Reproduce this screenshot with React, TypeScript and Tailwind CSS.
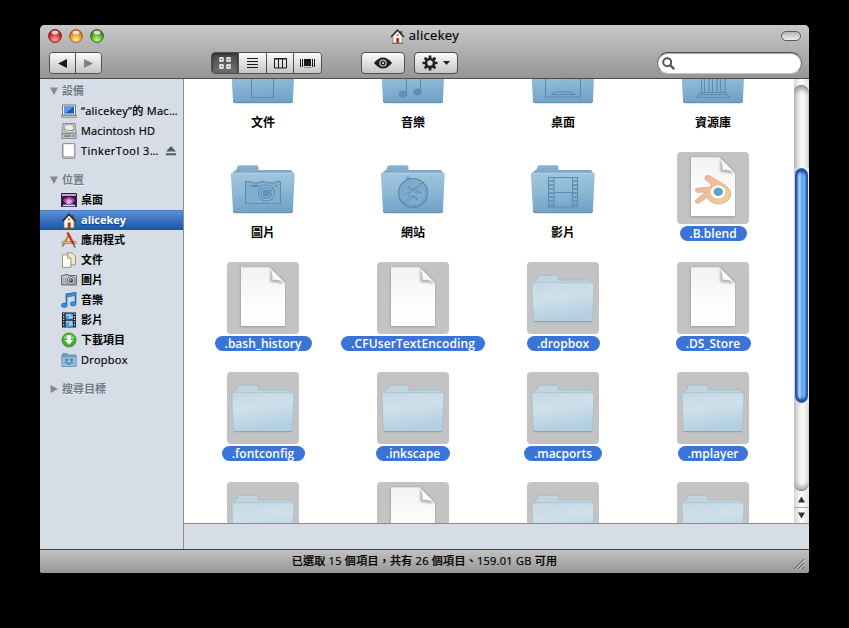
import React from 'react';

type Glyph = 'doc' | 'music' | 'desktop' | 'library' | 'camera' | 'compass' | 'film';

function Folder({ glyph }: { glyph: Glyph }) {
  return (
    <svg viewBox="0 0 72 72" className="size-[72px]">
      <defs>
        <linearGradient id="fb" x1="0" y1="0" x2="0" y2="1">
          <stop offset="0" stopColor="#8db5d0" />
          <stop offset="1" stopColor="#6b9dc1" />
        </linearGradient>
        <linearGradient id="ff" x1="0" y1="0" x2=".12" y2="1">
          <stop offset="0" stopColor="#a3c6dd" />
          <stop offset="0.5" stopColor="#8fb9d6" />
          <stop offset="1" stopColor="#71a3c9" />
        </linearGradient>
      </defs>
      <path d="M6 24V20l3.500-2.500L10.500 14.500q.5-1.300 2-1.300H29.500q2 0 2 2V18H63q2 0 2.500 2l1 2V26H6z" fill="url(#fb)" />
      <path d="M4.500 20.800H66.700q1.200 0 1 1.600L65.900 58.500q0 2-2 2H8q-2 0-2-2L3.900 22.400q-.2-1.600.6-1.600z" fill="url(#ff)" />
      <path d="M6.200 59q.3 1.700 2 1.700H63.700q1.800 0 2-1.700" fill="none" stroke="#587e9c" strokeWidth="1" />
      <path d="M4.500 21.300H67" stroke="#b7d3e5" strokeWidth=".8" />
      <g fill="none" stroke="#5d8cb2" strokeWidth="1.100">
        {glyph === 'camera' && (
          <>
            <path d="M18.500 31q-.5-2 2-1.500h3l1 1.200H32q4-2.500 8 0h8l1-1.200h3.500q1.500.5 1 2V51.500H18.500z" fill="#81aecd" />
            <path d="M24.500 34h7M48.500 34h1.500" strokeWidth="1.800" />
            <circle cx="39.500" cy="41" r="8" fill="#8ab3d1" />
            <circle cx="39.500" cy="41" r="5.300" />
            <circle cx="39.500" cy="41" r="3" fill="#6394ba" />
          </>
        )}
        {glyph === 'compass' && (
          <>
            <circle cx="36" cy="41" r="14.300" strokeWidth="1.600" />
            <circle cx="36" cy="41" r="12.300" fill="#80adce" strokeWidth=".5" />
            <circle cx="31" cy="26.500" r="1.500" />
            <path d="M45 31l-5.500 8 5.500 1.500-6 2 2 6-5-3.500-9 7 6-8.500-6-1.500 6-2-2-6 5 3.500z" fill="#6c9bc0" strokeWidth=".6" />
            <path d="M44 32L28.500 50.500M32 37l8 8M29 42h14" stroke="#96bbd6" strokeWidth=".8" />
          </>
        )}
        {glyph === 'film' && (
          <>
            <path d="M21.500 25.500H50.500V55H21.500zM27 25.500v29.500M45.500 25.500v29.500M27 40.500H45.500" />
            <path
              d="M22 29h4.500M22 33h4.500M22 37h4.500M22 41h4.500M22 45h4.500M22 49h4.500M22 53h4.500M46 29h4.500M46 33h4.500M46 37h4.500M46 41h4.500M46 45h4.500M46 49h4.500M46 53h4.500"
              strokeWidth="1.600"
            />
          </>
        )}
        {glyph === 'doc' && <path d="M24.500 25H46.500V55.500H24.500z" />}
        {glyph === 'music' && (
          <>
            <path d="M29.500 51V30l14-2V49" />
            <ellipse cx="26" cy="52" rx="3.700" ry="3" fill="#5e8fb6" />
            <ellipse cx="40.500" cy="50" rx="3.700" ry="3" fill="#5e8fb6" />
          </>
        )}
        {glyph === 'desktop' && <path d="M18.500 28H53.500V55H18.500zM25 52.500l3-2.500H44l3.500 2.500z" />}
        {glyph === 'library' && (
          <path d="M24.500 30v20M27.500 30v20M32 30v20M35.500 30v20M40 30v20M43.500 30v20M48 30v20M24 50.500H48l1.500 2H22.500zM22 52.500h28l3 3H19.500z" />
        )}
      </g>
    </svg>
  );
}

function PaleFolder() {
  return (
    <svg viewBox="0 0 72 72" className="size-[72px]">
      <defs>
        <linearGradient id="pf" x1="0" y1="0" x2=".25" y2="1">
          <stop offset="0" stopColor="#c5d9e4" />
          <stop offset="0.45" stopColor="#cfe0ea" />
          <stop offset="1" stopColor="#b3cfe1" />
        </linearGradient>
      </defs>
      <path d="M7 24v-4l3-3 1-2.500q.5-1.200 2-1.200H29.500q1.700 0 1.700 1.700V18H62.500l3 2v4z" fill="#c0d5e0" stroke="#9fb5c3" strokeWidth=".7" />
      <path d="M5.800 20.700H66q1 .5.900 1.700L65.500 57.500q0 2-1.500 2H7.700Q6.300 59.500 6.300 57.500L5 22.500q-.1-1.300.8-1.800z" fill="url(#pf)" stroke="#a3bac9" strokeWidth=".6" />
      <path d="M6.600 59.700H65.400" stroke="#899dab" strokeWidth="1" />
    </svg>
  );
}

function FilePage({ blend }: { blend?: boolean }) {
  return (
    <svg viewBox="0 0 72 72" className="size-[72px]">
      <defs>
        <linearGradient id="pg" x1="0" y1="0" x2="0" y2="1">
          <stop offset="0" stopColor="#f2f2f2" />
          <stop offset="0.6" stopColor="#fdfdfd" />
          <stop offset="1" stopColor="#fff" />
        </linearGradient>
        <linearGradient id="curl" x1="0" y1="1" x2="1" y2="0">
          <stop offset="0" stopColor="#e4e4e4" />
          <stop offset="0.45" stopColor="#fff" />
          <stop offset="1" stopColor="#ddd" />
        </linearGradient>
        <linearGradient id="org" x1="0" y1="0" x2="1" y2="1">
          <stop offset="0" stopColor="#efae96" />
          <stop offset="1" stopColor="#f3cf98" />
        </linearGradient>
        <filter id="soft" x="-20%" y="-20%" width="140%" height="140%">
          <feGaussianBlur stdDeviation="1" />
        </filter>
      </defs>
      <path d="M13.500 5.500H43L58 20.500V65H13.500z" fill="#8d8d8d" filter="url(#soft)" opacity=".8" />
      <path d="M14 5.300H42.500L58 21V64H14z" fill="url(#pg)" />
      <path d="M43.500 7V20Q50 19.500 56 22L52 16z" fill="#888" opacity=".7" filter="url(#soft)" />
      <path d="M42.500 5.300Q45.500 9 45.300 18.200Q54 17.500 58 21Z" fill="url(#curl)" stroke="#bbb" strokeWidth=".3" />
      {blend && (
        <g>
          <path
            d="M28.500 24.500q2-2 4.500-.5L48 33q7 5 5.500 11-2.500 8-13 8-8-1-10-7L22 51q-3 1-4-1 0-1.500 2-3l8-7-8 .5q-2-1-1.500-3.200Q19.500 36 22 36l11.500-1 .5-3L28.500 28q-1.500-2-0-3.500z"
            fill="url(#org)"
            stroke="#cfa994"
            strokeWidth=".7"
          />
          <ellipse cx="41" cy="40" rx="7.500" ry="6.500" fill="#fff" />
          <ellipse cx="41.300" cy="39.700" rx="4.700" ry="4.200" fill="#62a3cd" />
        </g>
      )}
    </svg>
  );
}

interface Item {
  name?: string;
  kind: Glyph | 'folder' | 'file' | 'blend';
  w?: string;
}

const items: Item[] = [
  { name: '文件', kind: 'doc' },
  { name: '音樂', kind: 'music' },
  { name: '桌面', kind: 'desktop' },
  { name: '資源庫', kind: 'library' },
  { name: '圖片', kind: 'camera' },
  { name: '網站', kind: 'compass' },
  { name: '影片', kind: 'film' },
  { name: '.B.blend', kind: 'blend', w: 'w-[67px]' },
  { name: '.bash_history', kind: 'file', w: 'w-[97px]' },
  { name: '.CFUserTextEncoding', kind: 'file', w: 'w-[144px] tracking-[0.1px]' },
  { name: '.dropbox', kind: 'folder', w: 'w-[73px]' },
  { name: '.DS_Store', kind: 'file', w: 'w-[75px]' },
  { name: '.fontconfig', kind: 'folder', w: 'w-[83px]' },
  { name: '.inkscape', kind: 'folder', w: 'w-[74px]' },
  { name: '.macports', kind: 'folder', w: 'w-[78px]' },
  { name: '.mplayer', kind: 'folder', w: 'w-[70px]' },
  { kind: 'folder' },
  { kind: 'file' },
  { kind: 'folder' },
  { kind: 'folder' },
];

function GridItem({ item }: { item: Item }) {
  const selected = item.kind === 'folder' || item.kind === 'file' || item.kind === 'blend';
  return (
    <div className="flex h-[110px] flex-col items-center">
      <div className={`size-[72px] rounded ${selected ? 'bg-[#c3c3c3]' : ''}`}>
        {item.kind === 'folder' ? (
          <PaleFolder />
        ) : item.kind === 'file' || item.kind === 'blend' ? (
          <FilePage blend={item.kind === 'blend'} />
        ) : (
          <Folder glyph={item.kind as Glyph} />
        )}
      </div>
      {item.name &&
        (selected ? (
          <div
            className={`mt-[2px] flex h-[15px] items-center justify-center rounded-full bg-[#3a74d6] text-[12px] font-semibold whitespace-nowrap text-white ${item.w}`}
          >
            {item.name}
          </div>
        ) : (
          <div className="mt-[1px] text-[12px] leading-[16px] font-bold">{item.name}</div>
        ))}
    </div>
  );
}

function House({ className }: { className: string }) {
  return (
    <svg viewBox="0 0 16 16" className={className}>
      <path d="M11 2h2v4h-2z" fill="#6b4a3c" />
      <path d="M3 8l5-6 5 6v7H3z" fill="#f7f3ea" stroke="#776d60" strokeWidth=".7" />
      <path d="M1 8.500L8 1.200l7 7.300" fill="none" stroke="#332b28" strokeWidth="1.500" />
      <path d="M6.700 9.500h3V15h-3z" fill="#a63a20" />
      <path d="M7 5.500h2v2H7z" fill="#c86b3a" />
      <path d="M2 15.300h12" stroke="#5f6152" strokeWidth=".8" />
    </svg>
  );
}

function SideIcon({ kind }: { kind: string }) {
  if (kind === 'home') return <House className="size-4" />;
  return (
    <svg viewBox="0 0 16 16" className="size-4 shrink-0">
      {kind === 'mac' && (
        <>
          <path d="M1.500 2h13v10h-13z" fill="#eef1f5" stroke="#6e7580" />
          <path d="M3 3.500h10v7H3z" fill="#1d57b8" />
          <path d="M3 3.500h10L4 10.500H3z" fill="#5b9bea" />
          <path d="M0 12.500h16l-.7 1.800H.7z" fill="#d6d9de" stroke="#6c727a" strokeWidth=".7" />
        </>
      )}
      {kind === 'hd' && (
        <>
          <path d="M2 .5h12l1.200 10v5H.8v-5z" fill="#c6c6c6" stroke="#777" strokeWidth=".7" />
          <ellipse cx="8" cy="5.500" rx="5" ry="4.300" fill="#ececec" stroke="#8c8c8c" strokeWidth=".8" />
          <path d="M3.500 5.500q4 4 9 1M1 10.700h14" stroke="#777" strokeWidth=".9" fill="none" />
          <path d="M3 13h7" stroke="#555" />
          <circle cx="12.500" cy="13" r=".8" fill="#444" />
        </>
      )}
      {kind === 'disk' && (
        <>
          <rect x="1.500" y=".5" width="12.500" height="15" rx="1.200" fill="#b9bbbd" stroke="#797c80" strokeWidth=".7" />
          <rect x="2.800" y="1.300" width="10" height="11.700" rx=".8" fill="#fff" />
        </>
      )}
      {kind === 'desktop' && (
        <>
          <path d="M.5 1.500h15v13H.5z" fill="#3b1250" stroke="#2b2636" />
          <path d="M1 2h14v2H1z" fill="#bfa6c8" />
          <path d="M2 8q6-6 12 0l-2 3H4z" fill="#b347ab" />
          <path d="M5 9q3-4 6 0l-1 3H6z" fill="#f0a2de" />
          <path d="M2 13.500h12" stroke="#d9e4f2" strokeWidth="1.500" />
          <path d="M4 12.500h2M7 12.500h2M10 12.500h2" stroke="#4ba3ea" strokeWidth="1.500" />
        </>
      )}
      {kind === 'apps' && (
        <>
          <path d="M1.500 14.500L8 2.500" stroke="#b5852f" strokeWidth="1.800" />
          <path d="M.5 10.500h15" stroke="#e2c37a" strokeWidth="1.800" />
          <path d="M.5 9.500h15M.5 11.500h15" stroke="#775c28" strokeWidth=".5" />
          <path d="M6.500.5l6 11.500" stroke="#d02a22" strokeWidth="2.400" />
          <path d="M12.500 12l1.700 3.500" stroke="#444" strokeWidth="1.200" />
        </>
      )}
      {kind === 'docs' && (
        <>
          <path d="M6 .8h5l3.500 3.500v8.500H6z" fill="#efe9cf" stroke="#8c8768" strokeWidth=".8" />
          <path d="M1.500 2.800h5L10 6.300v9H1.500z" fill="#fffef4" stroke="#85815f" strokeWidth=".8" />
          <path d="M6.500 2.800v3.500H10" fill="#ddd6b5" stroke="#85815f" strokeWidth=".6" />
        </>
      )}
      {kind === 'pics' && (
        <>
          <path d="M.5 3.500h3l.5-1h3l.5 1h8V13H.5z" fill="#aeb1b5" stroke="#55585c" strokeWidth=".8" />
          <path d="M1 5h14" stroke="#e6e8ea" />
          <circle cx="10" cy="8.500" r="4" fill="#d9dce0" stroke="#555" strokeWidth=".8" />
          <circle cx="10" cy="8.500" r="2.300" fill="#3f4d66" />
          <circle cx="9.500" cy="8" r=".8" fill="#c9d8f0" />
        </>
      )}
      {kind === 'music' && (
        <>
          <path d="M5.500 13V2.500l9-1.500v10" fill="none" stroke="#1f67b8" strokeWidth="1.600" />
          <path d="M5 2.200l10-1.700v3L5 5.200z" fill="#3c8fe0" stroke="#1a5ba6" strokeWidth=".5" />
          <ellipse cx="3.300" cy="13.300" rx="2.900" ry="2.200" fill="#3c8fe0" stroke="#1a5ba6" strokeWidth=".6" />
          <ellipse cx="12.200" cy="11.800" rx="2.900" ry="2.200" fill="#3c8fe0" stroke="#1a5ba6" strokeWidth=".6" />
        </>
      )}
      {kind === 'movies' && (
        <>
          <path d="M1 .5h14v15H1z" fill="#161a22" />
          <path d="M4.500 1.500h7.500v6H4.500zM4.500 8.500h7.500v6.500H4.500z" fill="#4f9be6" />
          <path d="M5 3h5l-2 3 4-1M5 10h6l-3 3 4-1" stroke="#cfe6fa" fill="none" />
          <path d="M2.700 1.500v13.500M13.500 1.500v13.500" stroke="#eee" strokeWidth="1.300" strokeDasharray="1.300 1.300" />
        </>
      )}
      {kind === 'down' && (
        <>
          <circle cx="8" cy="8" r="7" fill="#3fae33" stroke="#28771f" strokeWidth=".7" />
          <path d="M2.500 6.500a5.600 5 0 0 1 11 0q-5 2-11 0z" fill="#86d777" />
          <path d="M6.300 3.500h3.400V8h2.800L8 12.700 3.500 8h2.800z" fill="#fff" />
        </>
      )}
      {kind === 'dropbox' && (
        <>
          <path d="M1 3l1-1.500h4L7 3h8v11.500H1z" fill="#6c9cbe" stroke="#5a84a4" strokeWidth=".7" />
          <path d="M.7 4.800h14.800l-.4 9.700H1z" fill="#92bcd8" stroke="#6590b0" strokeWidth=".6" />
          <path d="M5.500 6.200L8 7.700l2.500-1.500 2 1.500-1.500 1.600 1.500 1.500-2 .7L8 13.300l-2.500-1.800-2-.7L5 9.300 3.500 7.700z" fill="#5b8cb2" />
          <path d="M5.800 9.300L8 8l2.200 1.300L8 10.700z" fill="#a8cbe2" />
        </>
      )}
    </svg>
  );
}

function SideRow({ icon, label, selected, eject, cls = '' }: { icon: string; label: string; selected?: boolean; eject?: boolean; cls?: string }) {
  return (
    <div
      className={`flex h-5 items-center pl-[21px] text-[11px] whitespace-nowrap ${
        selected
          ? 'border-t border-[#4580c8] bg-linear-to-b from-[#5590d6] to-[#1b53ab] font-bold text-white [text-shadow:0_1px_1px_#0f3a80]'
          : 'text-black'
      }`}
    >
      <SideIcon kind={icon} />
      <span className={`ml-1 ${cls}`}>{label}</span>
      {eject && (
        <svg viewBox="0 0 10 10" className="mr-[7px] ml-auto size-[10px]">
          <path d="M5 0l5 5.500H0zM0 7.300h10v2H0z" fill="#555b63" />
        </svg>
      )}
    </div>
  );
}

function SideHeader({ label, closed }: { label: string; closed?: boolean }) {
  return (
    <div className="flex h-5 items-center pl-[10px] text-[11px] font-bold text-[#717b89] [text-shadow:0_1px_0_#eef1f6]">
      <svg viewBox="0 0 8 8" className="mr-1 size-2">
        <path d={closed ? 'M.5 0v8L8 4z' : 'M0 .5h8L4 8z'} fill="#848b95" />
      </svg>
      {label}
    </div>
  );
}

function TrafficLight({ id, dark, mid, light }: { id: string; dark: string; mid: string; light: string }) {
  return (
    <svg viewBox="0 0 14 14" className="size-[14px]">
      <defs>
        <radialGradient id={id} cx=".5" cy=".8" r=".75">
          <stop offset="0" stopColor={light} />
          <stop offset="0.55" stopColor={mid} />
          <stop offset="1" stopColor={dark} />
        </radialGradient>
      </defs>
      <circle cx="7" cy="7" r="6.400" fill={`url(#${id})`} stroke={dark} strokeWidth="1" />
      <ellipse cx="7" cy="3.600" rx="3.400" ry="2" fill="#fff" opacity=".75" />
    </svg>
  );
}

const button = 'flex items-center justify-center bg-linear-to-b from-[#fbfbfb] to-[#c6c6c6]';
const latin = 'font-medium [-webkit-text-stroke:0.2px_currentColor]';

export default function App() {
  return (
    <div className="h-[628px] w-[849px] overflow-hidden bg-black pt-[25px] pl-[40px] font-['Open_Sans','Noto_Sans_CJK_TC',sans-serif] text-black" lang="zh-TW">
      <div className="flex h-[548px] w-[769px] flex-col overflow-hidden rounded-t-[5px] rounded-b-[3px] bg-white">
        <header className="h-[54px] shrink-0 border-b border-[#4a4a4a] bg-linear-to-b from-[#c8c8c8] to-[#969696]">
          <div className="grid h-[22px] grid-cols-[1fr_auto_1fr] items-center pr-2 pl-2">
            <div className="flex gap-[7px]">
              <TrafficLight id="r" dark="#8e1a1f" mid="#e0393f" light="#ffb0a8" />
              <TrafficLight id="y" dark="#a25f1c" mid="#efa038" light="#fff39a" />
              <TrafficLight id="g" dark="#2c6b1b" mid="#62b135" light="#cdf78e" />
            </div>
            <div className="flex items-center text-[13px]">
              <House className="mr-1 size-[15px]" />
              <span className={`tracking-[0.3px] ${latin}`}>alicekey</span>
            </div>
            <div className="h-[10px] w-5 justify-self-end rounded-full border border-[#5d5d5d] bg-linear-to-b from-[#b5b5b5] to-[#efefef]" />
          </div>
          <div className="flex pt-[5px] pl-[9px]">
            <div className="flex h-[22px] w-[53px] overflow-hidden rounded border border-[#505050]">
              <div className={`${button} flex-1 border-r border-[#505050]`}>
                <svg viewBox="0 0 9 9" className="size-[9px]">
                  <path d="M0 4.500L9 0v9z" fill="#1d1d1d" />
                </svg>
              </div>
              <div className={`${button} flex-1`}>
                <svg viewBox="0 0 9 9" className="size-[9px]">
                  <path d="M9 4.500L0 0v9z" fill="#808080" />
                </svg>
              </div>
            </div>
            <div className="ml-[109px] flex h-[22px] w-[111px] overflow-hidden rounded border border-[#505050]">
              <div className="flex w-[26px] shrink-0 items-center justify-center bg-linear-to-b from-[#484848] to-[#707070] shadow-[inset_0_1px_3px_#222]">
                <svg viewBox="0 0 12 12" className="size-3" fill="none" stroke="#fff" strokeWidth="1.300">
                  <path d="M1 1h3v3H1zM8 1h3v3H8zM1 8h3v3H1zM8 8h3v3H8z" />
                </svg>
              </div>
              <div className={`${button} w-7 border-l border-[#505050]`}>
                <svg viewBox="0 0 11 11" className="size-[11px]">
                  <path d="M0 .5h11M0 3.500h11M0 6.500h11M0 9.500h11" stroke="#1a1a1a" />
                </svg>
              </div>
              <div className={`${button} w-7 border-l border-[#505050]`}>
                <svg viewBox="0 0 13 11" className="h-[11px] w-[13px]">
                  <path d="M.5.500h12v9.500H.5zM4.500 1v9M8.500 1v9M0 1h13" fill="none" stroke="#1a1a1a" />
                </svg>
              </div>
              <div className={`${button} w-7 border-l border-[#505050]`}>
                <svg viewBox="0 0 15 10" className="h-[10px] w-[15px]">
                  <path d="M.5 1v8M2.500 1v8M12.500 1v8M14.500 1v8" stroke="#1a1a1a" />
                  <path d="M4 1h7v7H4z" fill="#1a1a1a" />
                  <path d="M4 9.500h7" stroke="#888" />
                </svg>
              </div>
            </div>
            <div className={`${button} ml-[39px] h-[22px] w-11 rounded border border-[#505050]`}>
              <svg viewBox="0 0 18 12" className="h-3 w-[18px]">
                <path d="M0 6Q9-5 18 6 9 17 0 6z" fill="#1e1e1e" />
                <circle cx="9" cy="6" r="3.600" fill="#e8e8e8" />
                <circle cx="9" cy="6" r="2.600" fill="#1e1e1e" />
                <circle cx="9" cy="6" r="1" fill="#fff" />
              </svg>
            </div>
            <div className={`${button} ml-[9px] h-[22px] w-11 gap-[5px] rounded border border-[#505050]`}>
              <svg viewBox="0 0 16 16" className="size-4" fill="none" stroke="#222">
                <circle cx="8" cy="8" r="4" strokeWidth="2.600" />
                <path d="M8 .5v3M8 12.500v3M.5 8h3M12.500 8h3M2.700 2.700l2 2M11.300 11.300l2 2M13.300 2.700l-2 2M4.700 11.300l-2 2" strokeWidth="2.700" />
              </svg>
              <svg viewBox="0 0 7 4" className="h-1 w-[7px]">
                <path d="M0 0h7L3.500 4z" fill="#222" />
              </svg>
            </div>
            <div className="mr-[7px] ml-auto flex h-[22px] w-[145px] items-center rounded-full border border-[#777] border-t-[#4c4c4c] border-b-[#c5c5c5] bg-white pl-1 shadow-[inset_0_1px_1px_#aaa]">
              <svg viewBox="0 0 13 13" className="size-[13px]" fill="none" stroke="#555" strokeWidth="2">
                <circle cx="5.200" cy="5.200" r="4" />
                <path d="M8.200 8.200l4 4" strokeWidth="2.400" />
              </svg>
            </div>
          </div>
        </header>

        <div className="flex h-[470px] shrink-0">
          <aside className="h-[470px] w-[144px] shrink-0 border-r border-[#8d8d8d] bg-[#d6dde6] pt-[2px]">
            <SideHeader label="設備" />
            <SideRow icon="mac" label="“alicekey”的 Mac…" cls={`tracking-[0.3px] ${latin}`} />
            <SideRow icon="hd" label="Macintosh HD" cls={`tracking-[0.15px] ${latin}`} />
            <SideRow icon="disk" label="TinkerTool 3…" eject cls={`tracking-[0.45px] ${latin}`} />
            <div className="h-[9px]" />
            <SideHeader label="位置" />
            <SideRow icon="desktop" label="桌面" cls="font-bold" />
            <SideRow icon="home" label="alicekey" selected />
            <SideRow icon="apps" label="應用程式" cls="font-bold" />
            <SideRow icon="docs" label="文件" cls="font-bold" />
            <SideRow icon="pics" label="圖片" cls="font-bold" />
            <SideRow icon="music" label="音樂" cls="font-bold" />
            <SideRow icon="movies" label="影片" cls="font-bold" />
            <SideRow icon="down" label="下載項目" cls="font-bold" />
            <SideRow icon="dropbox" label="Dropbox" cls={`tracking-[0.25px] ${latin}`} />
            <div className="h-[9px]" />
            <SideHeader label="搜尋目標" closed />
          </aside>

          <div className="flex flex-1 flex-col">
            <div className="flex h-[444px]">
              <main className="h-[444px] w-[610px] overflow-hidden bg-white pl-1">
                <div className="-mt-[37px] grid w-[600px] grid-cols-4">
                  {items.map((item, i) => (
                    <GridItem key={i} item={item} />
                  ))}
                </div>
              </main>
              <div className="flex w-[15px] flex-col bg-linear-to-r from-[#c9c9c9] via-[#f8f8f8] to-[#ececec]">
                <div className="h-[6px] bg-linear-to-r from-[#d8d8d8] via-white to-[#ddd]" />
                <div className="h-[83px] rounded-t-full border-t border-[#777] shadow-[inset_0_3px_4px_#999]" />
                <div className="ml-px h-[235px] w-[13px] rounded-full border border-[#24549f] bg-[linear-gradient(90deg,#2f66c8_0%,#86b9f5_20%,#b5daff_36%,#5a9cf0_52%,#7ab8fb_75%,#4a86dd_100%)] shadow-[inset_0_3px_3px_#184398,inset_0_-3px_3px_#2049a0]" />
                <div className="h-[88px] rounded-b-full border-b border-[#777] shadow-[inset_0_-3px_4px_#aaa]" />
                <div className="flex h-4 items-center justify-center bg-linear-to-r from-[#d5d5d5] via-white to-[#e0e0e0]">
                  <svg viewBox="0 0 7 7" className="size-[7px]">
                    <path d="M3.500.500L7 6.500H0z" fill="#333" />
                  </svg>
                </div>
                <div className="flex h-4 items-center justify-center border-t border-[#aaa] bg-linear-to-r from-[#d5d5d5] via-white to-[#e0e0e0]">
                  <svg viewBox="0 0 7 7" className="size-[7px]">
                    <path d="M3.500 6.500L7 .500H0z" fill="#333" />
                  </svg>
                </div>
              </div>
            </div>
            <div className="h-[26px] border-t border-[#8c8c8c] bg-[#d6dde6]" />
          </div>
        </div>

        <footer className="relative flex h-[24px] shrink-0 items-center justify-center border-t border-[#3f3f3f] bg-linear-to-b from-[#c2c2c2] to-[#969696] text-[11px]">
          <span className={`tracking-[0.27px] ${latin}`}>已選取 15 個項目，共有 26 個項目、159.01 GB 可用</span>
          <svg viewBox="0 0 12 12" className="absolute right-1 bottom-[3px] size-3" stroke="#555">
            <path d="M1 11L11 1M5 11l6-6M9 11l2-2" />
            <path d="M2 11.800L11.800 2M6 11.800L11.800 6" stroke="#ddd" strokeWidth=".7" />
          </svg>
        </footer>
      </div>
    </div>
  );
}
